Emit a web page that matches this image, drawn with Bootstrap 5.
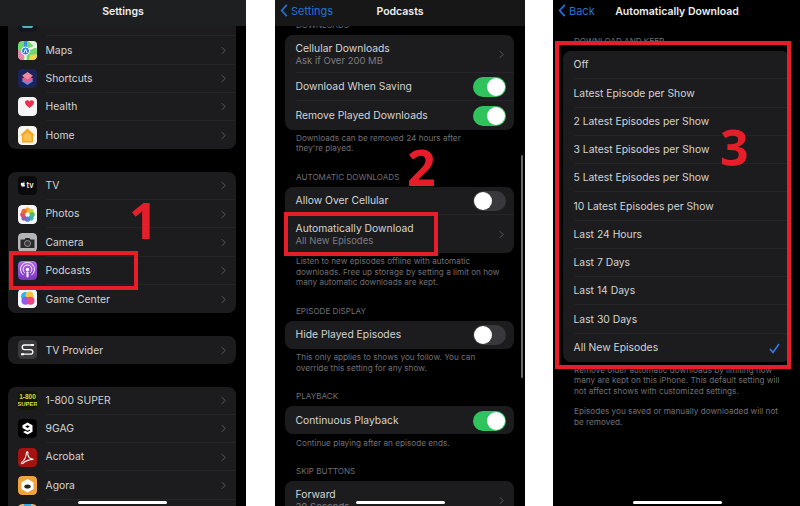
<!DOCTYPE html>
<html lang="en">
<head>
  <meta charset="UTF-8" />
  <title>Podcasts automatic downloads</title>
  <link href="https://cdn.jsdelivr.net/npm/bootstrap@5.3.0/dist/css/bootstrap.min.css" rel="stylesheet" />
  <style>
    html, body { width: 800px; height: 506px; overflow: hidden; background: #fff; }
    body { font-family: Inter, "Liberation Sans", sans-serif; }
    .phones { width: 800px; height: 506px; justify-content: space-between; }
    .phone { position: relative; height: 506px; overflow: hidden; background: #000; color: #d4d4d4; }
    .phone-a { width: 246px; margin-right: 29px; padding: 8px 10px 0 8px; }
    .phone-b { width: 250px; margin-right: 28px; padding: 20px 11px 0 10px; }
    .phone-c { width: 247px; padding: 36px 10px 0 10px; }
    .top-bar { position: absolute; top: 0; left: 0; right: 0; height: 26px; z-index: 2; background: #1e1f21; font-size: 10.5px; font-weight: 600; color: #eee; }
    .phone-b .top-bar { background: #171717; }
    .phone-c .top-bar { background: #000; }
    .top-title { position: absolute; top: 0; left: 0; right: 0; line-height: 23px; text-align: center; }
    .phone-c .top-title { left: 1px; padding-right: 0; }
    .back-link { position: absolute; top: 0; left: 5px; line-height: 23px; color: #2273d6; font-weight: 400; font-size: 11px; }
    .back-link svg { margin-right: 3px; vertical-align: -2px; }
    .ios-group { --bs-list-group-bg: #1c1c1e; --bs-list-group-color: #d4d4d4; --bs-list-group-border-width: 0; --bs-list-group-border-radius: 8px; margin-bottom: 22.6px; }
    .ios-item { display: flex; align-items: stretch; padding: 0 0 0 10.5px; font-size: 10.35px; }
    .item-body { flex: 1 1 auto; min-width: 0; min-height: 28.25px; display: flex; align-items: center; justify-content: space-between; padding-top: 1px; padding-right: 10px; border-bottom: 1px solid #252527; }
    .ios-item:last-child .item-body { border-bottom: 0; }
    .item-tall .item-body { min-height: 38px; }
    .app-icon { flex: none; width: 19px; height: 19px; margin: 4.6px 8.5px 0 -0.5px; border-radius: 4px; display: block; }
    .sub-text { font-size: 9.5px; line-height: 12px; color: #7d7d81; }
    .main-text { line-height: 13px; }
    .sec-head { font-size: 8.1px; line-height: 10px; height: 10px; margin: 18px 0 5px 11px; color: #707074; white-space: nowrap; }
    .sec-head.first { margin-top: 0; }
    .sec-foot { font-size: 8.2px; line-height: 10.5px; margin: 3.2px 0 0 11px; color: #707074; }
    .phone-b .ios-group, .phone-c .ios-group { margin-bottom: 0; }
    .foot-gap { margin-top: 10px !important; }
    .ios-switch.form-check-input { width: 33px; height: 20px; margin: 0; border: 0; border-radius: 10px; background-color: #39393d; background-size: 18px 18px; background-image: url("data:image/svg+xml,%3csvg xmlns='http://www.w3.org/2000/svg' viewBox='-4 -4 8 8'%3e%3ccircle r='4' fill='%23fff'/%3e%3c/svg%3e"); background-position: 1px center; }
    .ios-switch.form-check-input:checked { background-color: #30c25c; background-position: right 1px center; }
    .mark-box { position: absolute; z-index: 3; border: 4px solid #e61e2a; }
    .mark-num { position: absolute; z-index: 3; color: #e61e2a; font-family: "Open Sans", sans-serif; font-weight: 700; font-size: 50px; line-height: 50px; }
    .home-bar { position: absolute; z-index: 4; bottom: 2px; width: 89px; height: 3px; border-radius: 2px; background: #fff; }
    .scroll-bar { position: absolute; z-index: 2; right: 2px; top: 155px; width: 2px; height: 223px; border-radius: 1px; background: #6a6a6c; }
  </style>
</head>
<body>
  <svg width="0" height="0" class="position-absolute">
    <symbol id="chev" viewBox="0 0 6 10"><path d="M1 1l4 4-4 4" fill="none" stroke="#5c5c60" stroke-width="1.2"/></symbol>
    <symbol id="back" viewBox="0 0 8 14"><path d="M7 1L1.5 7 7 13" fill="none" stroke="#2273d6" stroke-width="1.8"/></symbol>
  </svg>

  <div class="phones d-flex">
    <!-- settings list -->
    <div class="phone phone-a">
      <div class="top-bar"><div class="top-title">Settings</div></div>

      <ul class="list-group ios-group">
        <li class="list-group-item ios-item">
          <svg class="app-icon" viewBox="0 0 19 19"><rect width="19" height="19" rx="4" fill="#10181c"/><path d="M3 12c3-4 9-4 13 0l-2 3H5z" fill="#4fb3c4"/></svg>
          <div class="item-body"><span>Translate</span><svg width="5" height="9"><use href="#chev"/></svg></div>
        </li>
        <li class="list-group-item ios-item">
          <svg class="app-icon" viewBox="0 0 19 19"><rect width="19" height="19" rx="4" fill="#74d66e"/><path d="M10 0h9v8z" fill="#e2f2dc"/><path d="M0 9l5 2v8H4a4 4 0 01-4-4z" fill="#ee82b0"/><path d="M12 14l7-1v2a4 4 0 01-4 4h-4z" fill="#f3d34c"/><path d="M6 0h3v8H6z" fill="#3d8fe0"/><path d="M9 9L19 5" stroke="#fff" stroke-width="2"/><path d="M7.500 13v6" stroke="#fff" stroke-width="2"/><circle cx="7.500" cy="10" r="4" fill="#1f7ae0" stroke="#fff"/><path d="M5.800 12.200l1.700-4.400 1.700 4.400" fill="none" stroke="#fff"/></svg>
          <div class="item-body"><span>Maps</span><svg width="5" height="9"><use href="#chev"/></svg></div>
        </li>
        <li class="list-group-item ios-item">
          <svg class="app-icon" viewBox="0 0 19 19"><rect width="19" height="19" rx="4" fill="#1b2358"/><path d="M9.500 8l6 4-6 4-6-4z" fill="#5c8ee8"/><path d="M9.500 6l6 4-6 4-6-4z" fill="#e45a8c"/><path d="M9.500 3l5.500 3.700-5.500 3.700L4 6.700z" fill="#f08ca0"/></svg>
          <div class="item-body"><span>Shortcuts</span><svg width="5" height="9"><use href="#chev"/></svg></div>
        </li>
        <li class="list-group-item ios-item">
          <svg class="app-icon" viewBox="0 0 19 19"><rect width="19" height="19" rx="4" fill="#f5f5f5"/><path d="M11.500 11C9 9.200 7 7.600 7 5.600 7 3 10.300 2.500 11.500 4.600 12.700 2.500 16 3 16 5.600 16 7.600 14 9.200 11.500 11z" fill="#ee2f4e"/></svg>
          <div class="item-body"><span>Health</span><svg width="5" height="9"><use href="#chev"/></svg></div>
        </li>
        <li class="list-group-item ios-item">
          <svg class="app-icon" viewBox="0 0 19 19"><rect width="19" height="19" rx="4" fill="#f7f5ef"/><path d="M9.500 2.500L17 9.500h-2v7H4v-7H2z" fill="#f5a623"/><path d="M5.500 9.500l4-3.500 4 3.500v5.500h-8z" fill="#fbc04e"/></svg>
          <div class="item-body"><span>Home</span><svg width="5" height="9"><use href="#chev"/></svg></div>
        </li>
      </ul>

      <ul class="list-group ios-group">
        <li class="list-group-item ios-item">
          <svg class="app-icon" viewBox="0 0 19 19"><rect width="19" height="19" rx="4" fill="#0a0a0a"/><path d="M4.300 6.800c.5-.3 1-.1 1.300 0 .4-.1.900-.3 1.400.1-.9.700-.7 1.900.2 2.300-.3.800-.8 1.600-1.300 1.600-.4 0-.6-.2-.9-.2s-.5.200-.9.200c-1.100-.5-1.900-3.200-.9-4zM5.500 6.500c0-.6.400-1 1-1.100 0 .6-.4 1.100-1 1.100z" fill="#eee"/><text x="8.500" y="11.500" font-size="7.500" font-weight="600" fill="#eee" font-family="Inter, sans-serif">tv</text></svg>
          <div class="item-body"><span>TV</span><svg width="5" height="9"><use href="#chev"/></svg></div>
        </li>
        <li class="list-group-item ios-item">
          <svg class="app-icon" viewBox="0 0 19 19"><rect width="19" height="19" rx="4" fill="#f7f7f7"/><circle cx="9.500" cy="5" r="2.600" fill="#f5a623"/><circle cx="13" cy="6.300" r="2.600" fill="#c4d637"/><circle cx="14.200" cy="9.500" r="2.600" fill="#58b95a"/><circle cx="13" cy="13" r="2.600" fill="#3eb4b0"/><circle cx="9.500" cy="14.200" r="2.600" fill="#5a7fd0"/><circle cx="6" cy="13" r="2.600" fill="#8a5fb0"/><circle cx="4.800" cy="9.500" r="2.600" fill="#d94f6c"/><circle cx="6" cy="6.300" r="2.600" fill="#ea6a34"/></svg>
          <div class="item-body"><span>Photos</span><svg width="5" height="9"><use href="#chev"/></svg></div>
        </li>
        <li class="list-group-item ios-item">
          <svg class="app-icon" viewBox="0 0 19 19"><rect width="19" height="19" rx="4" fill="#b4b4b6"/><path d="M2.500 6.500h4l1-1.500h4l1 1.500h4v8.500h-14z" fill="#2a2a2c"/><circle cx="9.500" cy="10.500" r="3" fill="#3c3c3e" stroke="#bbb" stroke-width=".7"/></svg>
          <div class="item-body"><span>Camera</span><svg width="5" height="9"><use href="#chev"/></svg></div>
        </li>
        <li class="list-group-item ios-item">
          <svg class="app-icon" viewBox="0 0 19 19"><defs><linearGradient id="podBg" x1="0" y1="0" x2="0" y2="1"><stop offset="0" stop-color="#b56be6"/><stop offset="1" stop-color="#7a35c0"/></linearGradient></defs><rect width="19" height="19" rx="4" fill="url(#podBg)"/><g fill="none" stroke="#fff"><path d="M5.600 14.200a7 7 0 117.800 0" stroke-width=".9"/><path d="M6.700 11.800a4.400 4.400 0 115.600 0" stroke-width=".9"/></g><circle cx="9.500" cy="8.500" r="1.700" fill="#fff"/><rect x="8.500" y="10.500" width="2" height="6" rx="1" fill="#fff"/></svg>
          <div class="item-body"><span>Podcasts</span><svg width="5" height="9"><use href="#chev"/></svg></div>
        </li>
        <li class="list-group-item ios-item">
          <svg class="app-icon" viewBox="0 0 19 19"><rect width="19" height="19" rx="4" fill="#f8f8f8"/><circle cx="7.500" cy="7.500" r="4.500" fill="#2fb4f0"/><circle cx="11.500" cy="6.500" r="4" fill="#f6c53a"/><circle cx="7.500" cy="11.800" r="4" fill="#8a5cf0"/><circle cx="12.500" cy="11.800" r="4" fill="#f0447a"/></svg>
          <div class="item-body"><span>Game Center</span><svg width="5" height="9"><use href="#chev"/></svg></div>
        </li>
      </ul>

      <ul class="list-group ios-group">
        <li class="list-group-item ios-item">
          <svg class="app-icon" viewBox="0 0 19 19"><rect width="19" height="19" rx="4" fill="#3a3a3c"/><path d="M14 5H6.500a2.300 2.300 0 000 4.600h6a2.300 2.300 0 010 4.600H4" fill="none" stroke="#fff" stroke-width="1.300"/><path d="M13 4h3v2h-3zM3 13.300h3v2H3z" fill="#fff"/></svg>
          <div class="item-body"><span>TV Provider</span><svg width="5" height="9"><use href="#chev"/></svg></div>
        </li>
      </ul>

      <ul class="list-group ios-group">
        <li class="list-group-item ios-item">
          <svg class="app-icon" viewBox="0 0 19 19"><rect width="19" height="19" rx="2" fill="#15160a"/><text x="9.500" y="8.300" text-anchor="middle" font-size="6.500" font-weight="800" fill="#d8dc3c" font-family="Liberation Sans, sans-serif">1-800</text><text x="9.500" y="15" text-anchor="middle" font-size="6" font-weight="800" fill="#d8dc3c" font-family="Liberation Sans, sans-serif">SUPER</text></svg>
          <div class="item-body"><span>1-800 SUPER</span><svg width="5" height="9"><use href="#chev"/></svg></div>
        </li>
        <li class="list-group-item ios-item">
          <svg class="app-icon" viewBox="0 0 19 19"><rect width="19" height="19" rx="4" fill="#000"/><path d="M9.500 3.500l5 2.800v6.400l-5 2.800-4.500-2.500 2.300-1.300 2.200 1.200 2.600-1.500v-1l-2.600 1.400-5-2.800V6.300z" fill="#fff"/><path d="M9.500 6.300l-2.300 1.300 2.300 1.300 2.300-1.300z" fill="#000"/></svg>
          <div class="item-body"><span>9GAG</span><svg width="5" height="9"><use href="#chev"/></svg></div>
        </li>
        <li class="list-group-item ios-item">
          <svg class="app-icon" viewBox="0 0 19 19"><rect width="19" height="19" rx="4" fill="#a5120f"/><path d="M3.500 14.500c2.500-1.500 4.500-5 5-10 .1-1.200 1.700-1 1.400.4-.7 3.500 1.700 6.500 5.600 6.500-4 .2-8 1.200-10.500 4-1 .8-2 0-1.500-.9z" fill="none" stroke="#fff" stroke-width="1.100"/></svg>
          <div class="item-body"><span>Acrobat</span><svg width="5" height="9"><use href="#chev"/></svg></div>
        </li>
        <li class="list-group-item ios-item">
          <svg class="app-icon" viewBox="0 0 19 19"><rect width="19" height="19" rx="4" fill="#eea33e"/><path d="M9.500 3l6 3.500v6.500l-6 3.500-6-3.500V6.500z" fill="#fff"/><ellipse cx="9.500" cy="10.500" rx="3.200" ry="2" fill="#2a2320"/></svg>
          <div class="item-body"><span>Agora</span><svg width="5" height="9"><use href="#chev"/></svg></div>
        </li>
        <li class="list-group-item ios-item">
          <svg class="app-icon" viewBox="0 0 19 19"><rect width="19" height="19" rx="4" fill="#d9b27c"/><rect x="6" width="7" height="19" fill="#3ba7d8"/></svg>
          <div class="item-body"><span></span><svg width="5" height="9"><use href="#chev"/></svg></div>
        </li>
      </ul>

      <div class="mark-box" style="left:9px;top:251px;width:129px;height:39px"></div>
      <div class="mark-num" style="left:129px;top:195px">1</div>
      <div class="home-bar" style="left:78px"></div>
    </div>

    <!-- podcasts settings -->
    <div class="phone phone-b">
      <div class="top-bar">
        <a class="back-link text-decoration-none"><svg width="8" height="13"><use href="#back"/></svg>Settings</a>
        <div class="top-title">Podcasts</div>
      </div>

      <div class="sec-head first">DOWNLOADS</div>
      <ul class="list-group ios-group">
        <li class="list-group-item ios-item item-tall">
          <div class="item-body"><div><div class="main-text">Cellular Downloads</div><div class="sub-text">Ask if Over 200 MB</div></div><svg width="5" height="9"><use href="#chev"/></svg></div>
        </li>
        <li class="list-group-item ios-item">
          <div class="item-body pe-2"><span>Download When Saving</span><input class="form-check-input ios-switch" type="checkbox" role="switch" checked /></div>
        </li>
        <li class="list-group-item ios-item">
          <div class="item-body pe-2"><span>Remove Played Downloads</span><input class="form-check-input ios-switch" type="checkbox" role="switch" checked /></div>
        </li>
      </ul>
      <p class="sec-foot">Downloads can be removed 24 hours after<br />they're played.</p>

      <div class="sec-head">AUTOMATIC DOWNLOADS</div>
      <ul class="list-group ios-group">
        <li class="list-group-item ios-item">
          <div class="item-body pe-2"><span>Allow Over Cellular</span><input class="form-check-input ios-switch" type="checkbox" role="switch" /></div>
        </li>
        <li class="list-group-item ios-item item-tall">
          <div class="item-body"><div><div class="main-text">Automatically Download</div><div class="sub-text">All New Episodes</div></div><svg width="5" height="9"><use href="#chev"/></svg></div>
        </li>
      </ul>
      <p class="sec-foot">Listen to new episodes offline with automatic<br />downloads. Free up storage by setting a limit on how<br />many automatic downloads are kept.</p>

      <div class="sec-head">EPISODE DISPLAY</div>
      <ul class="list-group ios-group">
        <li class="list-group-item ios-item">
          <div class="item-body pe-2"><span>Hide Played Episodes</span><input class="form-check-input ios-switch" type="checkbox" role="switch" /></div>
        </li>
      </ul>
      <p class="sec-foot">This only applies to shows you follow. You can<br />override this setting for any show.</p>

      <div class="sec-head">PLAYBACK</div>
      <ul class="list-group ios-group">
        <li class="list-group-item ios-item">
          <div class="item-body pe-2"><span>Continuous Playback</span><input class="form-check-input ios-switch" type="checkbox" role="switch" checked /></div>
        </li>
      </ul>
      <p class="sec-foot">Continue playing after an episode ends.</p>

      <div class="sec-head">SKIP BUTTONS</div>
      <ul class="list-group ios-group">
        <li class="list-group-item ios-item item-tall">
          <div class="item-body"><div><div class="main-text">Forward</div><div class="sub-text">30 Seconds</div></div><svg width="5" height="9"><use href="#chev"/></svg></div>
        </li>
      </ul>

      <div class="mark-box" style="left:9px;top:212px;width:154px;height:44px"></div>
      <div class="mark-num" style="left:132px;top:142px">2</div>
      <div class="scroll-bar"></div>
      <div class="home-bar" style="left:81px"></div>
    </div>

    <!-- automatically download options -->
    <div class="phone phone-c">
      <div class="top-bar">
        <a class="back-link text-decoration-none"><svg width="8" height="13"><use href="#back"/></svg>Back</a>
        <div class="top-title">Automatically Download</div>
      </div>

      <div class="sec-head first">DOWNLOAD AND KEEP</div>
      <ul class="list-group ios-group">
        <li class="list-group-item ios-item"><div class="item-body">Off</div></li>
        <li class="list-group-item ios-item"><div class="item-body">Latest Episode per Show</div></li>
        <li class="list-group-item ios-item"><div class="item-body">2 Latest Episodes per Show</div></li>
        <li class="list-group-item ios-item"><div class="item-body">3 Latest Episodes per Show</div></li>
        <li class="list-group-item ios-item"><div class="item-body">5 Latest Episodes per Show</div></li>
        <li class="list-group-item ios-item"><div class="item-body">10 Latest Episodes per Show</div></li>
        <li class="list-group-item ios-item"><div class="item-body">Last 24 Hours</div></li>
        <li class="list-group-item ios-item"><div class="item-body">Last 7 Days</div></li>
        <li class="list-group-item ios-item"><div class="item-body">Last 14 Days</div></li>
        <li class="list-group-item ios-item"><div class="item-body">Last 30 Days</div></li>
        <li class="list-group-item ios-item"><div class="item-body">All New Episodes<svg width="11" height="11" viewBox="0 0 11 11"><path d="M1 6l3 3.500L10 1" fill="none" stroke="#2f80e8" stroke-width="1.500"/></svg></div></li>
      </ul>
      <p class="sec-foot">Remove older automatic downloads by limiting how<br />many are kept on this iPhone. This default setting will<br />not affect shows with customized settings.</p>
      <p class="sec-foot foot-gap">Episodes you saved or manually downloaded will not<br />be removed.</p>

      <div class="mark-box" style="left:2px;top:41px;width:236px;height:328px"></div>
      <div class="mark-num" style="left:167px;top:122px">3</div>
      <div class="home-bar" style="left:80px"></div>
    </div>
  </div>

  <script src="https://cdn.jsdelivr.net/npm/bootstrap@5.3.0/dist/js/bootstrap.bundle.min.js"></script>
</body>
</html>
